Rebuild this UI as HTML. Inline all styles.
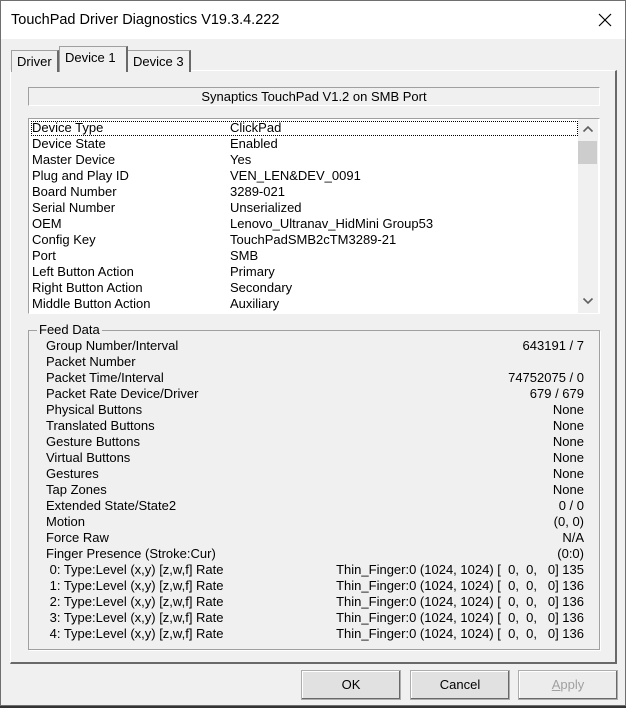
<!DOCTYPE html>
<html><head><style>
*{margin:0;padding:0;box-sizing:border-box}
body{width:626px;height:708px;background:#333;font-family:"Liberation Sans",sans-serif;font-size:13px;color:#000;position:relative;overflow:hidden}
.win{position:absolute;left:0;top:0;width:626px;height:706px;background:#f0f0f0;border:1px solid #6f6f6f}
.title{position:absolute;left:0;top:0;width:624px;height:38px;background:#fff;font-size:14.5px}
.title span{position:absolute;left:10px;top:11px}
.a{position:absolute}
.tab{position:absolute;top:49px;height:22px;border:1px solid #a0a0a0;border-bottom:none;background:#f0f0f0;padding:3px 5px 0;font-size:13px;border-right:2px solid #696969}
.panel{position:absolute;left:9px;top:69px;width:607px;height:594px;border-top:1px solid #fff;border-left:1px solid #fff;border-right:2px solid #696969;border-bottom:2px solid #696969}
.row{position:absolute;height:16px;line-height:16px;white-space:nowrap}
.btn{position:absolute;top:669px;width:100px;height:30px;border:1px solid #adadad;background:#e1e1e1;text-align:center;line-height:28px;font-size:13px;box-shadow:inset -1px -1px 0 #696969, inset 1px 1px 0 #fff}
</style></head><body>
<div class="win">
<div class="title"><span>TouchPad Driver Diagnostics V19.3.4.222</span>
<svg class="a" style="left:597px;top:12px" width="14" height="14"><path d="M1 1L13 13M13 1L1 13" stroke="#000" stroke-width="1.2"/></svg></div>
<div class="panel"></div>
<div class="tab" style="left:10px;width:48px">Driver</div>
<div class="tab" style="left:126px;width:64px">Device 3</div>
<div class="tab" style="left:58px;top:45px;height:26px;width:69px;border-bottom:none;z-index:2">Device 1</div>
<div class="a" style="left:27px;top:86px;width:572px;height:19px;border:1px solid #a0a0a0;border-right-color:#fff;border-bottom-color:#fff;text-align:center;line-height:17px;font-size:13px">Synaptics TouchPad V1.2 on SMB Port</div>
<div class="a" style="left:27px;top:117px;width:572px;height:196px;background:#fff;border:1px solid #a0a0a0;border-right-color:#fff;border-bottom-color:#fff">
 <div class="a" style="left:2px;top:2px;width:547px;height:15px;border:1px dotted #000"></div>
 <div class="a" style="left:549px;top:0;width:20px;height:194px;background:#f0f0f0">
  <div class="a" style="left:0;top:22px;width:19px;height:23px;background:#cdcdcd"></div>
  <svg class="a" style="left:4px;top:6px" width="12" height="8"><path d="M1.5 6.5L6 2L10.5 6.5" stroke="#606060" stroke-width="1.6" fill="none"/></svg>
  <svg class="a" style="left:4px;top:178px" width="12" height="8"><path d="M1.5 1.5L6 6L10.5 1.5" stroke="#606060" stroke-width="1.6" fill="none"/></svg>
 </div>
</div>
<div id="list"></div>
<div class="a" style="left:27px;top:329px;width:572px;height:320px;border:1px solid #a0a0a0;box-shadow:1px 1px 0 #fff"></div>
<div class="a" style="left:36px;top:321px;background:#f0f0f0;padding:0 2px;font-size:13px">Feed Data</div>
<div id="feed"></div>
<div class="btn" style="left:300px">OK</div>
<div class="btn" style="left:409px">Cancel</div>
<div class="btn" style="left:517px;color:#a0a0a0;background:#ececec"><u>A</u>pply</div>
</div>
<script>
var L=[["Device Type","ClickPad"],["Device State","Enabled"],["Master Device","Yes"],["Plug and Play ID","VEN_LEN&DEV_0091"],["Board Number","3289-021"],["Serial Number","Unserialized"],["OEM","Lenovo_Ultranav_HidMini Group53"],["Config Key","TouchPadSMB2cTM3289-21"],["Port","SMB"],["Left Button Action","Primary"],["Right Button Action","Secondary"],["Middle Button Action","Auxiliary"]];
var h="";L.forEach(function(r,i){var y=119+i*16;h+='<div class="row" style="left:31px;top:'+y+'px">'+r[0].replace(/&/g,"&amp;")+'</div><div class="row" style="left:229px;top:'+y+'px">'+r[1].replace(/&/g,"&amp;")+'</div>';});
document.getElementById("list").innerHTML=h;
var F=[["Group Number/Interval","643191 / 7"],["Packet Number",""],["Packet Time/Interval","74752075 / 0"],["Packet Rate Device/Driver","679 / 679"],["Physical Buttons","None"],["Translated Buttons","None"],["Gesture Buttons","None"],["Virtual Buttons","None"],["Gestures","None"],["Tap Zones","None"],["Extended State/State2","0 / 0"],["Motion","(0, 0)"],["Force Raw","N/A"],["Finger Presence (Stroke:Cur)","(0:0)"]];
for(var k=0;k<5;k++)F.push([" "+k+": Type:Level (x,y) [z,w,f] Rate","Thin_Finger:0 (1024, 1024) [&nbsp; 0,&nbsp; 0,&nbsp;&nbsp; 0] "+(k?136:135)]);
h="";F.forEach(function(r,i){var y=337+i*16;h+='<div class="row" style="left:45px;top:'+y+'px">'+r[0].replace(/^ /,"&nbsp;")+'</div><div class="row" style="right:41px;top:'+y+'px;text-align:right">'+r[1]+'</div>';});
document.getElementById("feed").innerHTML=h;
</script>
</body></html>
